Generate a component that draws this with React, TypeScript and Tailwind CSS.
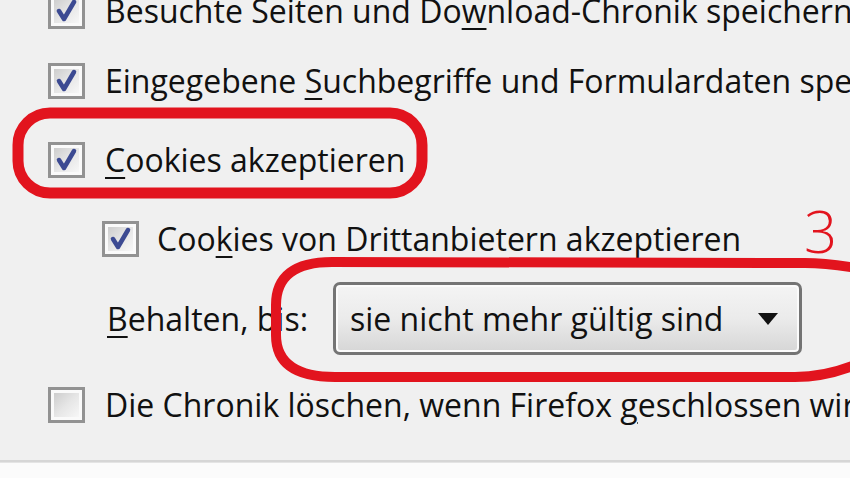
import React from "react";

const Check: React.FC<{ checked?: boolean }> = ({ checked }) => (
  <div className="relative w-[37px] h-[36px] shrink-0 border-[3px] border-[#929292] bg-[#fafafa] p-[3px]">
    <div className="w-full h-full bg-linear-to-br from-[#cdcdcd] via-[#e6e6e6] to-[#f7f7f7]" />
    {checked && (
      <svg className="absolute inset-0" width="31" height="30" viewBox="0 0 31 30">
        <path
          d="M8 15 L13 23 L23 6"
          fill="none"
          stroke="#3c4a92"
          strokeWidth="4.5"
          strokeLinecap="round"
          strokeLinejoin="round"
        />
      </svg>
    )}
  </div>
);

const Key: React.FC<{ children: React.ReactNode }> = ({ children }) => (
  <span className="underline decoration-2 underline-offset-[5px]">{children}</span>
);

export default function App() {
  return (
    <div
      className="relative w-[850px] h-[478px] overflow-hidden bg-[#f0f0f0] text-[#111] text-[32px] leading-none whitespace-nowrap"
      style={{ fontFamily: '"Open Sans", "Noto Sans", sans-serif' }}
    >
      <div className="flex flex-col pl-[48px] h-[460px]">
        {/* Chronik options */}
        <div className="flex items-center gap-[20px] h-[36px] mt-[-7px]">
          <Check checked />
          <span>
            Besuchte Seiten und Do<Key>w</Key>nload-Chronik speichern
          </span>
        </div>
        <div className="flex items-center gap-[20px] h-[36px] mt-[34px]">
          <Check checked />
          <span>
            Eingegebene <Key>S</Key>uchbegriffe und Formulardaten speichern
          </span>
        </div>
        <div className="flex items-center gap-[20px] h-[36px] mt-[43px]">
          <Check checked />
          <span>
            <Key>C</Key>ookies akzeptieren
          </span>
        </div>
        <div className="flex items-center gap-[18px] h-[36px] mt-[43px] ml-[54px]">
          <Check checked />
          <span>
            Coo<Key>k</Key>ies von Drittanbietern akzeptieren
          </span>
        </div>

        {/* Behalten dropdown */}
        <div className="flex items-center h-[73px] mt-[25px] ml-[59px]">
          <span className="w-[226px]">
            <Key>B</Key>ehalten, bis:
          </span>
          <div className="flex items-center justify-between w-[469px] h-[73px] rounded-[7px] border-[3px] border-[#747474] bg-linear-to-b from-[#f4f4f4] via-[#ebebeb] to-[#d6d6d6] pl-[14px] pr-[20px] shadow-[inset_0_0_0_2px_#fbfbfb]">
            <span>sie nicht mehr gültig sind</span>
            <svg width="22" height="14" viewBox="0 0 22 14">
              <path d="M1 1 L21 1 L11 13 Z" fill="#111" />
            </svg>
          </div>
        </div>

        <div className="flex items-center gap-[20px] h-[36px] mt-[32px]">
          <Check />
          <span>
            Die Chronik löschen, wenn Firefox <Key>g</Key>eschlossen wird
          </span>
        </div>
      </div>

      {/* footer divider */}
      <div className="h-[3px] bg-[#d6d6d6] border-b border-[#e4e4e4]" />
      <div className="h-[15px] bg-[#fbfbfb]" />

      {/* red annotations */}
      <svg className="absolute inset-0 pointer-events-none" width="850" height="478" viewBox="0 0 850 478">
        <rect x="18" y="113" width="404" height="80" rx="32" fill="none" stroke="#e2141e" strokeWidth="11" />
        <path
          d="M862 269 C845 266 825 263 805 263 L332 262 Q276 262 276 305 L276 335 Q276 377 335 377 L795 377 C820 377 842 371 862 362"
          fill="none"
          stroke="#e2141e"
          strokeWidth="10"
        />
      </svg>
      <span
        className="absolute left-[804px] top-[202px] text-[58px] font-light leading-none text-[#e2141e]"
        style={{ fontFamily: '"Open Sans", sans-serif' }}
      >
        3
      </span>
    </div>
  );
}
